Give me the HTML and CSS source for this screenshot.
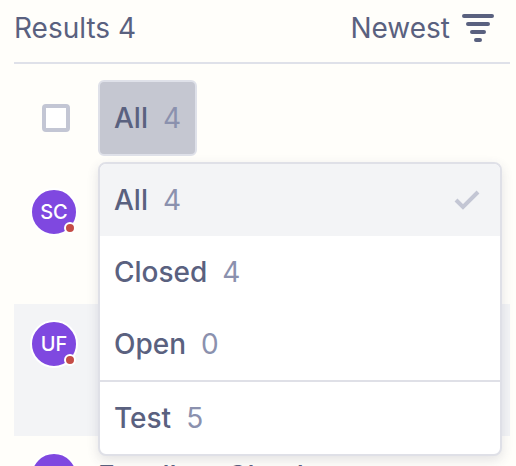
FILE: index.html
```
<!DOCTYPE html>
<html lang="en">
<head>
<meta charset="utf-8">
<title>Results</title>
<link rel="stylesheet" href="styles.css">
</head>
<body>
<main class="panel">
  <header class="header">
    <h1 class="title">Results 4</h1>
    <button class="sort" type="button">Newest
      <svg class="sort-icon" viewBox="0 0 32 28" aria-hidden="true"><path d="M2 2H30M6 10H26M10 18H22M14 26H18"/></svg>
    </button>
  </header>
  <div class="toolbar">
    <input class="select-all" type="checkbox" aria-label="Select all">
    <div class="filter">
      <button class="filter-button" type="button" aria-expanded="true">All <span class="count">4</span></button>
      <div class="menu">
        <button class="option selected" type="button">All <span class="count">4</span>
          <svg class="check" viewBox="0 0 26 20" aria-hidden="true"><path d="M2 10L9 17L24 2"/></svg>
        </button>
        <button class="option" type="button">Closed <span class="count">4</span></button>
        <button class="option" type="button">Open <span class="count">0</span></button>
        <button class="option divided" type="button">Test <span class="count">5</span></button>
      </div>
    </div>
  </div>
  <ul class="results">
    <li class="result"><span class="avatar">SC<i class="status"></i></span></li>
    <li class="result active"><span class="avatar">UF<i class="status"></i></span></li>
    <li class="result"><span class="avatar">EC<i class="status"></i></span><span class="name">Excellent Check</span></li>
  </ul>
</main>
</body>
</html>
```
FILE: styles.css
```
* { box-sizing: border-box; }
html { height: 100%; overflow: hidden; }
body {
  margin: 0;
  height: 100%;
  overflow: hidden;
  background: #fffefa;
  color: #5a617f;
  font: 400 28px/36px Inter, sans-serif;
}
button {
  margin: 0;
  border: 0;
  background: none;
  color: inherit;
  font: inherit;
  cursor: pointer;
}
.panel { padding: 0 6px 0 14px; }
.header {
  display: flex;
  justify-content: space-between;
  align-items: center;
  height: 64px;
  padding: 0 16px 6px 0;
  border-bottom: 2px solid #dfe1e9;
}
.title { margin: 0; font-size: inherit; font-weight: 400; }
.sort { display: flex; align-items: center; gap: 12px; padding: 0; }
.sort-icon { width: 32px; height: 28px; }
.sort-icon path { fill: none; stroke: #5a617f; stroke-width: 4; stroke-linecap: round; }
.toolbar {
  display: flex;
  align-items: center;
  gap: 28px;
  height: 108px;
  padding-left: 28px;
}
.select-all {
  appearance: none;
  width: 28px;
  height: 28px;
  margin: 0;
  border: 4px solid #c3c6d4;
  border-radius: 4px;
  background: #fff;
}
.filter { position: relative; flex: 1; }
.filter-button {
  display: flex;
  align-items: center;
  gap: 15px;
  height: 76px;
  padding: 0 14px;
  border: 2px solid #dfe1e9;
  border-radius: 6px;
  background: #c5c7d1;
  font-weight: 500;
}
.count { color: #8b91ae; font-weight: 400; }
.menu {
  position: absolute;
  z-index: 1;
  top: 100%;
  left: 0;
  right: 8px;
  margin-top: 6px;
  overflow: hidden;
  border: 2px solid #dfe0e7;
  border-radius: 8px;
  background: #fff;
  box-shadow: 0 4px 12px rgba(60, 60, 90, 0.14);
}
.option {
  display: flex;
  align-items: center;
  gap: 15px;
  width: 100%;
  height: 72px;
  padding: 0 20px 0 14px;
  font-weight: 500;
}
.selected { background: #f3f4f6; }
.divided { height: 74px; border-top: 2px solid #dfe0e7; }
.check { width: 26px; height: 20px; margin-left: auto; }
.check path { fill: none; stroke: #c3c6d4; stroke-width: 4; }
.results { margin: 0; padding: 0; list-style: none; }
.result { display: flex; gap: 20px; height: 132px; padding: 16px; }
.active { background: #f3f4f6; }
.avatar {
  position: relative;
  flex: none;
  width: 48px;
  height: 48px;
  border: 2px solid #fff;
  border-radius: 50%;
  background: #7f48e0;
  color: #fff;
  font-size: 20px;
  font-weight: 500;
  line-height: 44px;
  text-align: center;
}
.status {
  position: absolute;
  right: 0;
  bottom: 0;
  width: 12px;
  height: 12px;
  border: 2px solid #fff;
  border-radius: 50%;
  background: #c54c46;
}
.name { padding-top: 6px; font-weight: 500; }
```
